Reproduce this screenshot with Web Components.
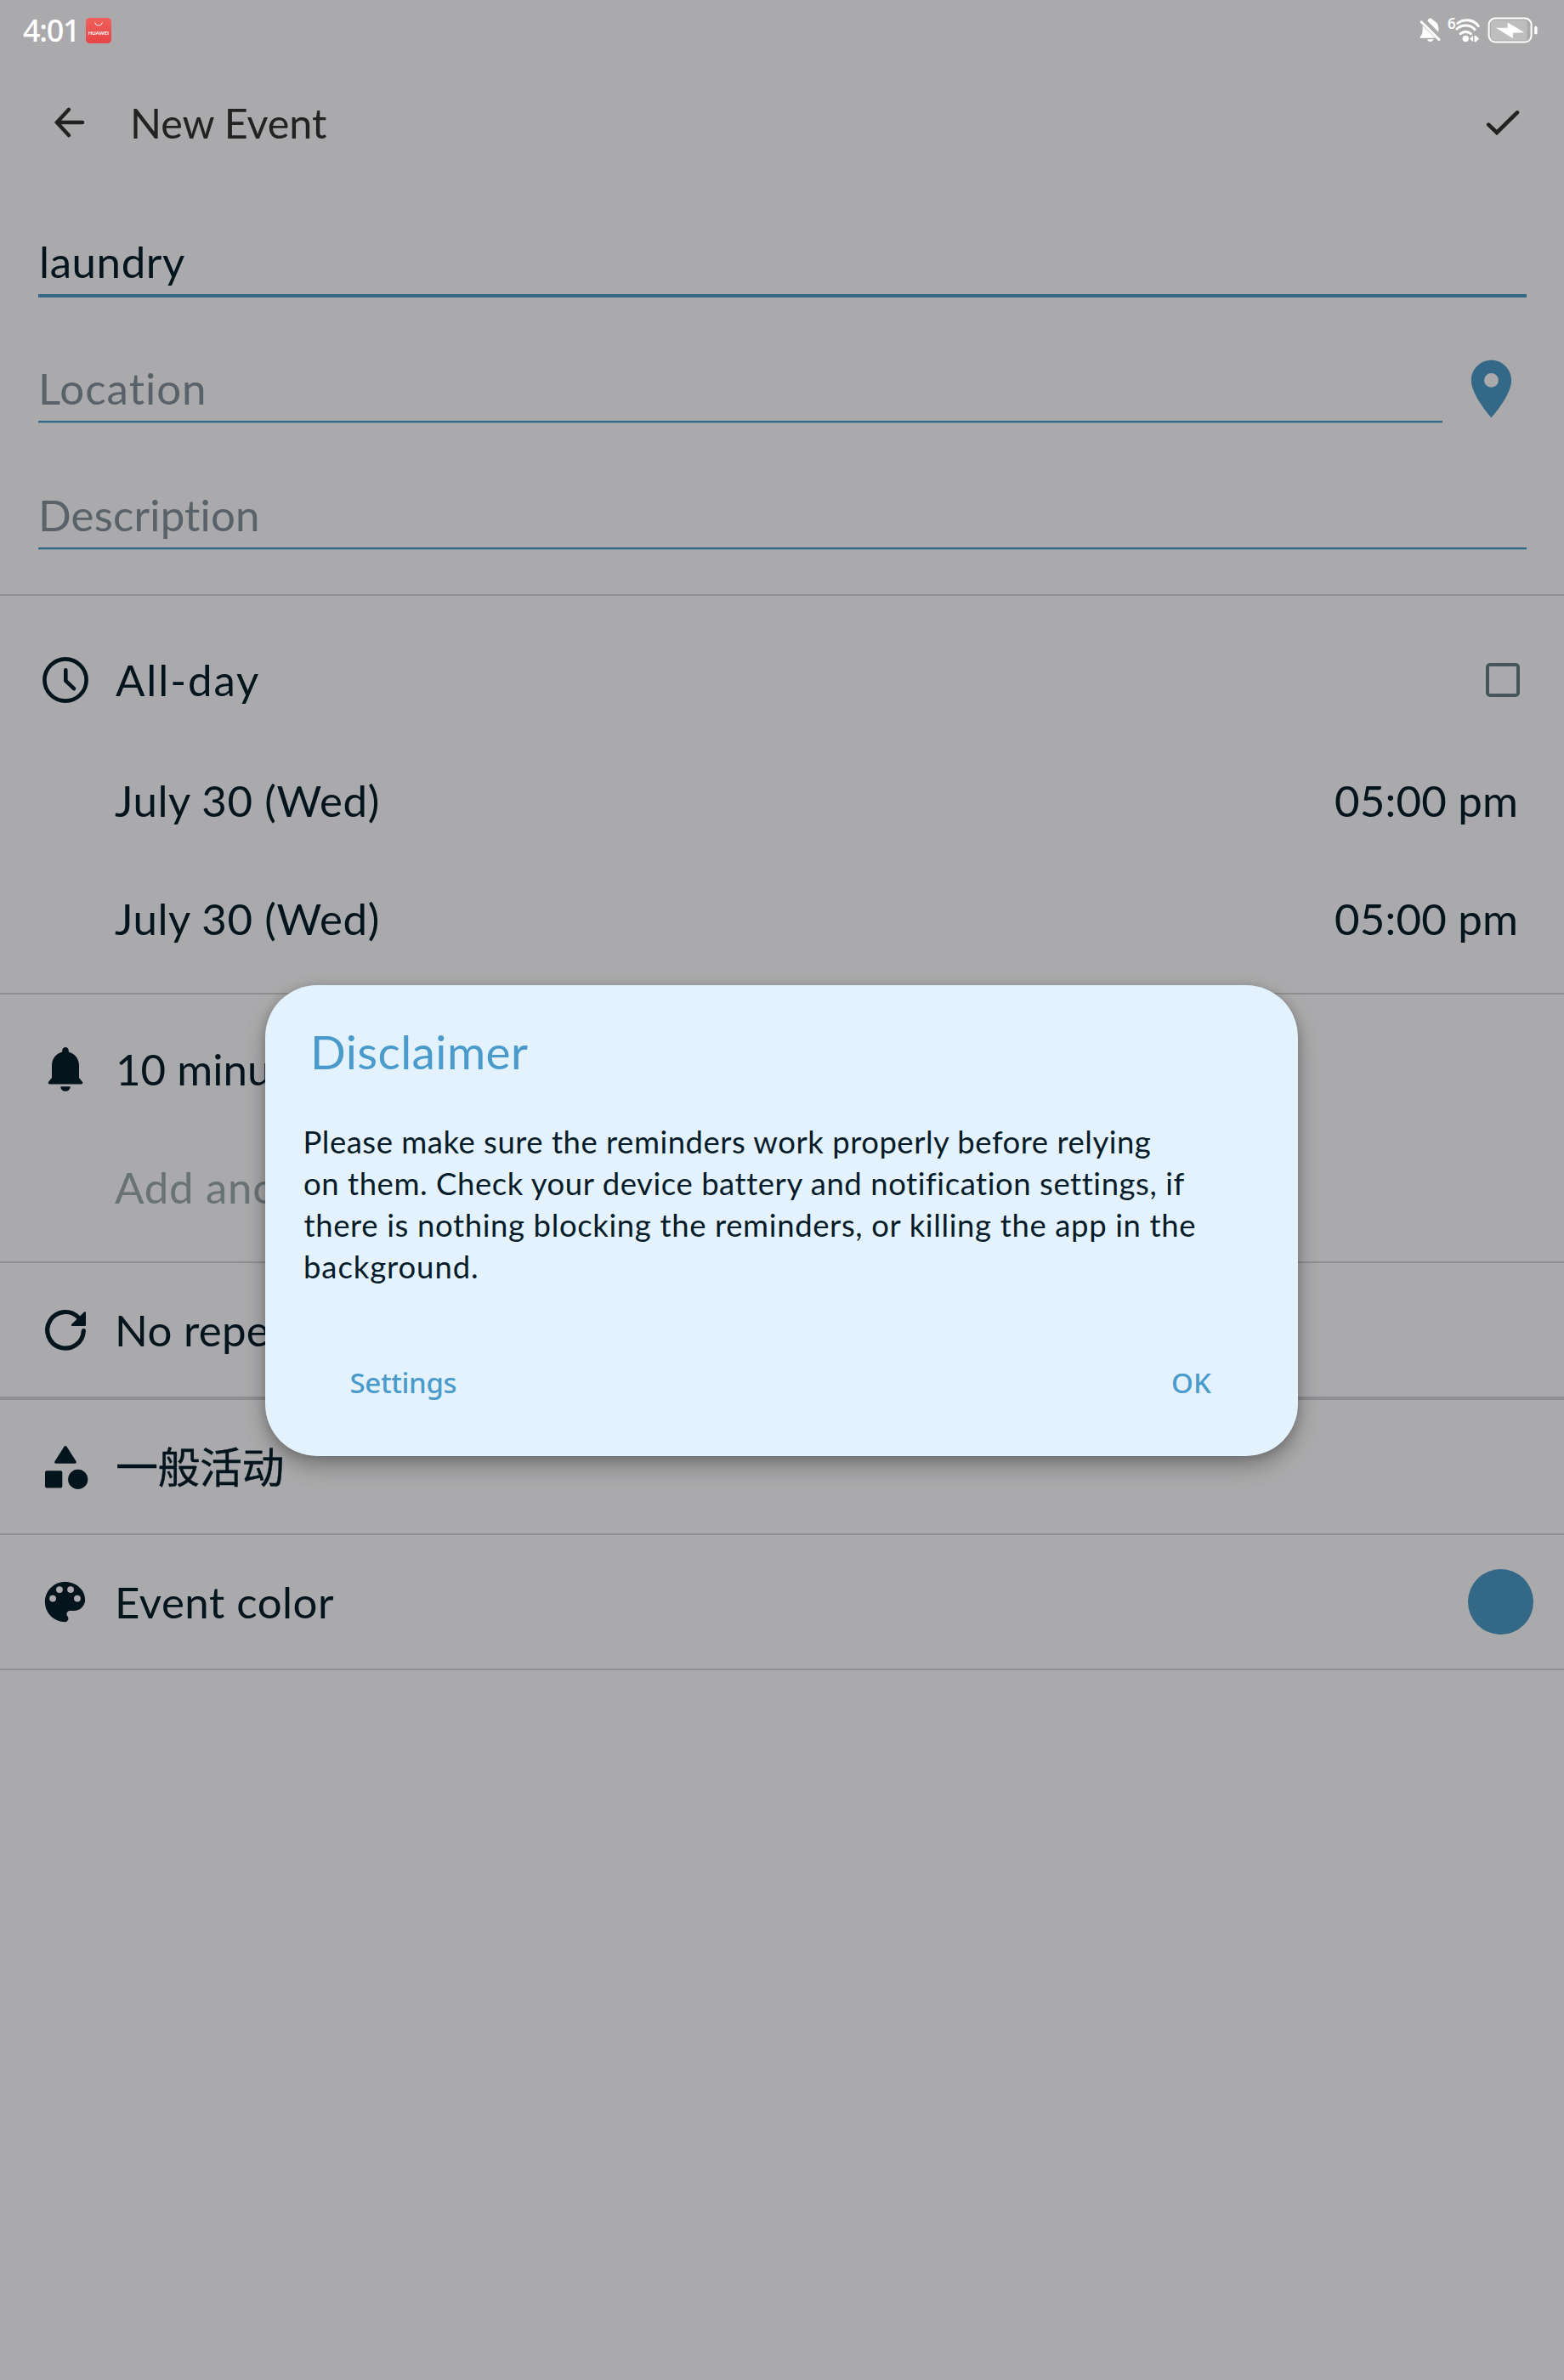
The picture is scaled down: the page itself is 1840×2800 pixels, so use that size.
<!DOCTYPE html>
<html lang="en">
<head>
<meta charset="utf-8">
<title>New Event</title>
<style>
html,body{margin:0;padding:0}
body{width:1840px;height:2800px;overflow:hidden;background:#aaaaac;font-family:Lato,"Noto Sans CJK SC",sans-serif}
</style>
</head>
<body>
<event-screen></event-screen>
<script>
const define=(name,html,setup)=>customElements.define(name,class extends HTMLElement{
  constructor(){super();this.attachShadow({mode:'open'}).innerHTML=html;}
  connectedCallback(){if(setup)setup.call(this,this.shadowRoot);}
});

/* One line of text. "ink" is the drawn width of the line, or of its first part given in "part-text". */
const ctx=document.createElement('canvas').getContext('2d');
define('ui-text',`<style>:host{display:block;white-space:pre;flex:none}</style><slot></slot>`,function(){
  const size=+this.getAttribute('size')||51,weight=this.getAttribute('weight')||400;
  const family=this.getAttribute('family')||'Lato,"Noto Sans CJK SC",sans-serif';
  const part=this.getAttribute('part-text')||this.textContent;
  ctx.font=`${weight} ${size}px ${family}`;
  const m=ctx.measureText(part),ink=m.actualBoundingBoxLeft+m.actualBoundingBoxRight;
  const target=+this.getAttribute('ink')||ink;
  const ls=(target-ink)/(Array.from(part).length-1);
  const dx=+this.getAttribute('dx')||0;
  Object.assign(this.style,{font:ctx.font,fontFamily:family,lineHeight:(this.getAttribute('line')||size*1.4)+'px',letterSpacing:ls.toFixed(3)+'px',
    marginLeft:(m.actualBoundingBoxLeft+dx).toFixed(2)+'px'});
  if(this.hasAttribute('end'))this.style.width=(target-m.actualBoundingBoxLeft)+'px';
});

const ICONS={
  back:['0 0 36 36','<path d="M33 18H4M17 2.8 2.9 18 17 33.2" fill="none" stroke="currentColor" stroke-width="4.4" stroke-linecap="round"/>'],
  check:['0 0 40 32','<path d="M3.2 18.6 13 28 37 4.4" fill="none" stroke="currentColor" stroke-width="4.6" stroke-linecap="round"/>'],
  pin:['0 0 24 24','<path fill="currentColor" d="M12 2C8.13 2 5 5.13 5 9c0 5.25 7 13 7 13s7-7.75 7-13c0-3.87-3.13-7-7-7zm0 9.5a2.5 2.5 0 1 1 0-5 2.5 2.5 0 0 1 0 5z"/>'],
  clock:['0 0 54 54','<g fill="none" stroke="currentColor" stroke-linecap="round" stroke-linejoin="round"><circle cx="27" cy="27" r="24.6" stroke-width="4.6"/><path stroke-width="4.6" d="M27.3 15.2v12.6l9.7 9.3"/></g>'],
  bell:['0 0 54 54','<path fill="currentColor" d="M27 1c2.2 0 3.8 1.7 3.8 4v1.5C38 8.5 43 14.500 43 22.500V37l3.500 4.200c1.600 2 .8 3.300-1.300 3.300H8.800c-2.100 0-2.900-1.300-1.300-3.300L11 37V22.500C11 14.500 16 8.500 23.200 6.500V5C23.200 2.700 24.800 1 27 1zM21.300 47.200h11.400c0 3.300-2.400 5.600-5.700 5.600s-5.700-2.300-5.700-5.600z"/>'],
  repeat:['0 0 54 54','<path fill="none" stroke="currentColor" stroke-width="5.2" stroke-linecap="round" d="M48.300 27.600A21.300 21.300 0 1 1 42.300 12"/><path fill="currentColor" d="M49 5.600c.8-.8 2-.4 2 .8V21a1 1 0 0 1-1 1H35c-1.300 0-1.700-1.200-.8-2z"/>'],
  category:['0 0 54 54','<g fill="currentColor"><path d="M25.400 3c.7-1.200 2.500-1.200 3.200 0l11 17.200c.7 1.200 0 2.500-1.500 2.500H15.900c-1.500 0-2.200-1.300-1.500-2.500z"/><rect x="3" y="31.200" width="20.300" height="20.300" rx="2"/><circle cx="41.700" cy="41.400" r="11.600"/></g>'],
  palette:['0 0 24 24','<path fill="currentColor" d="M12 3c-4.970 0-9 4.030-9 9s4.030 9 9 9c.83 0 1.500-.67 1.500-1.500 0-.39-.15-.74-.39-1.010-.23-.26-.38-.61-.38-.99 0-.83.67-1.500 1.500-1.500H16c2.760 0 5-2.240 5-5 0-4.420-4.030-8-9-8zM6.500 12a1.500 1.500 0 1 1 0-3 1.500 1.500 0 0 1 0 3zm3-4a1.500 1.500 0 1 1 0-3 1.500 1.500 0 0 1 0 3zm5 0a1.500 1.500 0 1 1 0-3 1.500 1.500 0 0 1 0 3zm3 4a1.500 1.500 0 1 1 0-3 1.500 1.500 0 0 1 0 3z"/>'],
  mute:['0 0 26 30','<path fill="#fff" d="M9.300 3.400C10 1.500 11.200.500 12.700.500s2.800 1 3.300 2.500c4.100 1.400 6.400 5 6.400 9.300v4.500zM4 9.500 18.400 23.800H1.300c-1 0-1.100-1-.4-1.700C3 20 3.600 17.500 3.600 14c0-1.700 0-3.200.4-4.500zM9 25.300h7.400c-.5 1.700-1.900 2.700-3.700 2.700S9.500 27 9 25.300z"/><path d="M2.200 4.800 23 25.600" stroke="#fff" stroke-width="3" stroke-linecap="round"/>'],
  wifi:['0 0 32 30','<g fill="none" stroke="#fff" stroke-width="3.100" stroke-linecap="round"><path d="M5 6.300C12 .9 23.500 1.500 29.300 9.600"/><path d="M4 13C9.500 7.600 19.500 7.600 25 13.600"/><path d="M8.300 18.600c3.400-3 8.600-3 12 0"/></g><circle cx="14.300" cy="24.500" r="3.700" fill="#fff"/><path fill="#fff" d="M23 21v7.200l-4-3.600zM24.500 21h2.200v7.200h-2.200zM26.500 21.200l3.600 3.400-3.600 3.400z"/>'],
  battery:['0 0 60 32','<rect x="1.600" y="1.600" width="50" height="28" rx="7.500" fill="none" stroke="#fff" stroke-width="2"/><path d="M8 4h38.500v23.600H8A4 4 0 0 1 4 23.600V8A4 4 0 0 1 8 4z" fill="#bebebf"/><rect x="55.200" y="10.800" width="3.400" height="9.600" rx="1.600" fill="#fff"/><path fill="#fff" d="M23.600 6.500 43.400 18.300 30 18.800l-.3 6.200L9.800 12.700h13.800z"/>'],
  bag:['0 0 30 30','<defs><linearGradient id="g" x2="0" y2="1"><stop stop-color="#f0605c"/><stop offset="1" stop-color="#e64545"/></linearGradient></defs><rect width="30" height="30" rx="4.500" fill="url(#g)"/><path d="M10.500 5.300a4.600 4.600 0 0 0 9 0" fill="none" stroke="#fff" stroke-width=".9"/>']
};
define('ui-icon',`<style>:host{display:block;flex:none}svg{display:block;width:100%;height:100%;overflow:visible}</style><svg></svg>`,function(root){
  const [box,body]=ICONS[this.getAttribute('name')];
  const svg=root.querySelector('svg');svg.setAttribute('viewBox',box);svg.innerHTML=body;
  this.style.width=this.getAttribute('w')+'px';this.style.height=(this.getAttribute('h')||this.getAttribute('w'))+'px';
});

define('app-badge',`<style>:host{display:grid;width:30px;height:30px;flex:none}.t{grid-area:1/1;padding:12.5px 0 0 2.700px}ui-icon{grid-area:1/1}</style>
<ui-icon name="bag" w="30"></ui-icon><div class="t"><ui-text size="6" weight="700" ink="24.500" line="9">HUAWEI</ui-text></div>`);

define('status-bar',`<style>:host{display:flex;align-items:center;height:72px;box-sizing:border-box;padding:0 30px 0 27px;color:#fff}
.c{width:74px;flex:none}.s{flex:1}.six{margin:-16px -1px 0 8px;width:7px}</style>
<div class="c"><ui-text size="36" weight="500" ink="61" line="70" family="'Noto Sans',sans-serif">4:01</ui-text></div><app-badge></app-badge><div class="s"></div>
<ui-icon name="mute" w="26" h="30"></ui-icon><div class="six"><ui-text size="17" weight="600" line="20" ink="7" family="'Noto Sans',sans-serif" dx="-1">6</ui-text></div><ui-icon name="wifi" w="32" h="30"></ui-icon><ui-icon name="battery" w="60" h="32" style="margin-left:8px"></ui-icon>`);

define('app-bar',`<style>:host{display:flex;align-items:center;height:144px;padding:0 52px 0 64px;color:#222223}.t{margin-left:57px;flex:1;padding-top:1px}</style>
<ui-icon name="back" w="36"></ui-icon><div class="t"><ui-text size="48.500" ink="228">New Event</ui-text></div><ui-icon name="check" w="40" h="32"></ui-icon>`);

define('text-field',`<style>:host{display:flex;flex-direction:column;flex:1;color:#596268}
.v{height:76px;padding-top:2px;display:flex;align-items:center;padding-left:4px}.l{height:2px;background:#336887;border-bottom:1px solid #7d93a1}
:host([active]){color:#04141d}:host([active]) .l{height:4px;border:0}</style><div class="v"><slot></slot></div><div class="l"></div>`);

define('form-row',`<style>:host{display:flex;align-items:center;padding:0 57px 0 50px;color:#04141d}
.i{width:54px;flex:none}.t{flex:1;display:flex;padding-left:var(--indent,35px)}</style>
<div class="i"><slot name="icon"></slot></div><div class="t"><slot></slot></div><slot name="end"></slot>`);

define('form-section',`<style>:host{display:block;border-bottom:var(--rule,2px) solid #8f8f91}</style><slot></slot>`);
define('check-box',`<style>:host{display:block;box-sizing:border-box;width:40px;height:40px;border:4px solid #48545b;border-radius:5px}</style>`);
define('color-dot',`<style>:host{display:block;width:77px;height:77px;border-radius:50%;background:#336887}</style>`);

define('alert-dialog',`<style>:host{display:flex;flex-direction:column;box-sizing:border-box;width:1215px;height:554px;padding:40px 102px 51px 46px;border-radius:61px;background:#e4f2fd;color:#041c2a;box-shadow:0 12px 26px rgba(0,0,0,.28),0 2px 12px rgba(0,0,0,.16)}
.h{padding-left:11px;color:#4a9bcb}.b{margin-top:44px;flex:1}.a{display:flex;justify-content:space-between;padding-left:55px;color:#4a9bcb}</style>
<div class="h"><slot name="title"></slot></div><div class="b"><slot></slot></div><div class="a"><slot name="dismiss"></slot><slot name="accept"></slot></div>`);

define('event-screen',`<style>
:host{display:block;width:1840px;height:2800px;background:#aaaaac;position:relative}
.fields{display:flex;flex-direction:column;padding:52px 44px 52px 45px}
.loc{display:flex;margin:67px 0 68px}
.loc ui-icon{color:#336887;margin:0 1px 0 17px}
.overlay{position:absolute;inset:0;padding:1159px 0 0 312px}
</style>
<status-bar></status-bar><app-bar></app-bar>
<form-section><div class="fields">
<text-field active><ui-text ink="168">laundry</ui-text></text-field>
<div class="loc"><text-field><ui-text ink="192">Location</ui-text></text-field><ui-icon name="pin" w="81"></ui-icon></div>
<text-field><ui-text ink="255">Description</ui-text></text-field>
</div></form-section>
<form-section style="padding:28px 0 18px">
<form-row style="height:141px;--indent:32px;padding-right:52px"><ui-icon slot="icon" name="clock" w="54" style="margin-left:-.5px"></ui-icon><ui-text ink="168">All-day</ui-text><check-box slot="end"></check-box></form-row>
<form-row style="height:141px;--indent:31px"><ui-text ink="311" style="padding-top:2px">July 30 (Wed)</ui-text><ui-text slot="end" end ink="212" style="padding-top:2px">05:00 pm</ui-text></form-row>
<form-row style="height:139px;--indent:31px"><ui-text ink="311">July 30 (Wed)</ui-text><ui-text slot="end" end ink="212">05:00 pm</ui-text></form-row>
</form-section>
<form-section style="padding:18px 0 19px">
<form-row style="height:139px;--indent:36px"><ui-icon slot="icon" name="bell" w="54" style="margin-left:-.5px"></ui-icon><ui-text part-text="10 min" ink="148.500">10 minu</ui-text></form-row>
<form-row style="height:138px;--indent:31px;color:#697275"><ui-text part-text="Add an" ink="159" style="padding-top:2px">Add ano</ui-text></form-row>
</form-section>
<form-section style="--rule:4px"><form-row style="height:157px"><ui-icon slot="icon" name="repeat" w="54" style="margin-left:-.5px"></ui-icon><ui-text part-text="No rep" ink="149">No repe</ui-text></form-row></form-section>
<form-section><form-row style="height:157px;--indent:34px"><ui-icon slot="icon" name="category" w="54" style="margin-left:-.5px"></ui-icon><ui-text lang="zh" size="50" ink="194.500" style="padding-bottom:6px;-webkit-text-stroke:.35px currentColor" family="'Noto Sans CJK SC',sans-serif">一般活动</ui-text></form-row></form-section>
<form-section><form-row style="height:157px;padding-right:36px"><ui-icon slot="icon" name="palette" w="63" style="margin-left:-5px"></ui-icon><ui-text ink="254">Event color</ui-text><color-dot slot="end"></color-dot></form-row></form-section>
<div class="overlay"><alert-dialog>
<ui-text slot="title" size="55" line="76" ink="251" dx="1">Disclaimer</ui-text>
<ui-text size="36.500" line="49" ink="996" dx="1.500">Please make sure the reminders work properly before relying</ui-text>
<ui-text size="36.500" line="49" ink="1036.500">on them. Check your device battery and notification settings, if</ui-text>
<ui-text size="36.500" line="49" ink="1048.500" dx="-.5">there is nothing blocking the reminders, or killing the app in the</ui-text>
<ui-text size="36.500" line="49" ink="202" dx="1">background.</ui-text>
<ui-text slot="dismiss" size="33" weight="500" line="70" ink="124" dx="-.5" family="'Noto Sans',sans-serif">Settings</ui-text>
<ui-text slot="accept" size="33" weight="500" line="70" ink="46" end family="'Noto Sans',sans-serif">OK</ui-text>
</alert-dialog></div>`);
</script>
</body>
</html>
